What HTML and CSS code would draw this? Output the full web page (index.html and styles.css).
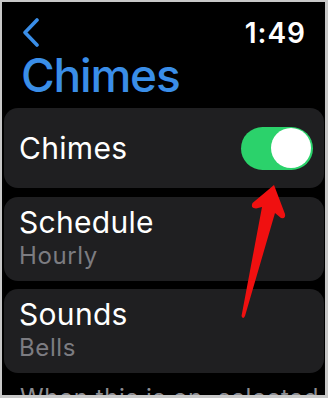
FILE: index.html
```html
<!DOCTYPE html>
<html lang="en">
<head>
<meta charset="utf-8">
<title>Chimes</title>
<link rel="stylesheet" href="styles.css">
</head>
<body>
<div class="frame">
  <div class="screen">
    <div class="top">
      <svg class="back" width="18" height="30" viewBox="0 0 18 30" aria-hidden="true">
        <path d="M15 2 L3 14.5 L15 27" fill="none" stroke="#3a8ee8" stroke-width="3.6" stroke-linecap="round" stroke-linejoin="round"/>
      </svg>
      <span class="time">1:49</span>
    </div>
    <h1 class="title">Chimes</h1>
    <div class="card toggle-card">
      <span class="label">Chimes</span>
      <span class="switch"><span class="knob"></span></span>
    </div>
    <div class="card">
      <div class="label">Schedule</div>
      <div class="sub">Hourly</div>
    </div>
    <div class="card">
      <div class="label">Sounds</div>
      <div class="sub">Bells</div>
    </div>
    <p class="note">When this is on, selected</p>
  </div>
  <svg class="arrow" width="328" height="398" viewBox="0 0 328 398" aria-hidden="true">
    <path d="M274 185 L285 214 Q286 219 281 218 L275 213 L245 316 Q243 320 241.5 316 L262 207 L256 208.5 Q250 208 252.5 203 Z" fill="#f01010"/>
  </svg>
</div>
</body>
</html>
```
FILE: styles.css
```css
* { box-sizing: border-box; }
html, body { margin: 0; padding: 0; background: #c8c8c8; }
body { width: 328px; height: 398px; overflow: hidden; font-family: Inter, "Liberation Sans", sans-serif; }
.frame {
  position: relative;
  width: 328px;
  height: 398px;
  border-style: solid;
  border-color: #c8c8c8;
  border-width: 2px 3px 3px 2px;
  background: #000;
  overflow: hidden;
}
.screen {
  height: 100%;
  padding: 0 1px 0 2px;
  overflow: hidden;
}
.top {
  margin-top: 16px;
  height: 30px;
  display: flex;
  align-items: center;
  justify-content: space-between;
  padding: 0 18px 0 18px;
}
.back { display: block; }
.time {
  color: #fff;
  font-size: 28px;
  line-height: 30px;
  font-weight: 600;
  letter-spacing: 1px;
}
.title {
  margin: 4px 0 0 0;
  padding-left: 17px;
  color: #3a8ee8;
  font-size: 46px;
  line-height: 46px;
  font-weight: 500;
  letter-spacing: -1.2px;
}
.card {
  background: #1f1f21;
  border-radius: 14px;
  margin-top: 8px;
  padding: 8px 11px 11px 15px;
  height: 84px;
}
.title + .card { margin-top: 10px; }
.toggle-card {
  height: 80px;
  padding: 0 11px 0 15px;
  display: flex;
  align-items: center;
  justify-content: space-between;
  margin-bottom: 9px;
}
.toggle-card + .card { margin-top: 0; }
.label {
  color: #fff;
  font-size: 30px;
  line-height: 34px;
  letter-spacing: 0.3px;
}
.sub {
  margin-top: 3px;
  color: #7c7c81;
  font-size: 24px;
  line-height: 28px;
  letter-spacing: 0.6px;
}
.switch {
  position: relative;
  width: 72px;
  height: 43px;
  border-radius: 22px;
  background: #2bd26b;
}
.knob {
  position: absolute;
  right: 2px;
  top: 1.5px;
  width: 40px;
  height: 40px;
  border-radius: 50%;
  background: #fff;
}
.note {
  margin: 11px 0 0 0;
  padding-left: 16px;
  color: #8d8d92;
  font-size: 24px;
  line-height: 28px;
  letter-spacing: 0.6px;
  white-space: nowrap;
}
.arrow {
  position: absolute;
  left: -2px;
  top: -2px;
}
```
